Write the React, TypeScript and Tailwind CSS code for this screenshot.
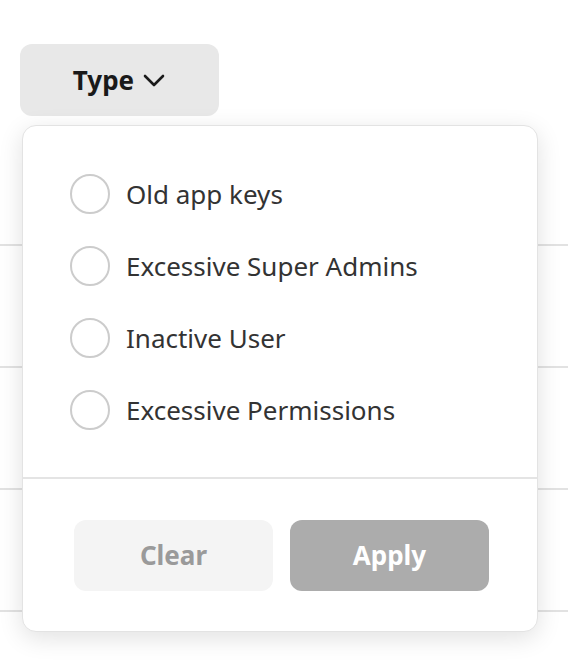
import { useState } from "react";

const options = [
  "Old app keys",
  "Excessive Super Admins",
  "Inactive User",
  "Excessive Permissions",
];

export default function App() {
  const [selected, setSelected] = useState<string | null>(null);

  return (
    <div
      className="relative h-[672px] w-[568px] overflow-hidden bg-white"
      style={{ fontFamily: '"Noto Sans", "Open Sans", sans-serif' }}
    >
      {/* table rows behind the menu */}
      <div className="h-[246px] border-b-2 border-[#e2e2e2] pl-[20px] pt-[44px]">
        <button className="flex h-[72px] w-[199px] items-center justify-center gap-[8px] rounded-[12px] bg-[#e8e8e8] text-[26px] font-bold text-[#1a1a1a]">
          Type
          <svg width="24" height="16" viewBox="0 0 24 16" fill="none">
            <polyline
              points="3,4 12,13 21,4"
              stroke="#1a1a1a"
              strokeWidth="2.6"
              strokeLinecap="round"
              strokeLinejoin="round"
            />
          </svg>
        </button>
      </div>
      <div className="h-[122px] border-b-2 border-[#e2e2e2]" />
      <div className="h-[122px] border-b-2 border-[#e2e2e2]" />
      <div className="h-[122px] border-b-2 border-[#e2e2e2]" />

      {/* dropdown */}
      <div className="absolute left-[22px] top-[125px] flex w-[516px] flex-col rounded-[14px] border border-[#e3e3e3] bg-white shadow-[0_6px_24px_rgba(0,0,0,0.12)]">
        <div className="flex flex-col pb-[31px] pl-[47px] pt-[32px]">
          {options.map((o) => (
            <label
              key={o}
              className="flex h-[72px] cursor-pointer items-center gap-[16px]"
              onClick={() => setSelected(o)}
            >
              <span className="flex h-[40px] w-[40px] items-center justify-center rounded-full border-2 border-[#cccccc]">
                {selected === o && (
                  <span className="h-[20px] w-[20px] rounded-full bg-[#333]" />
                )}
              </span>
              <span className="text-[26px] text-[#333333]">{o}</span>
            </label>
          ))}
        </div>
        <div className="h-[2px] bg-[#e4e4e4]" />
        <div className="flex gap-[17px] pb-[40px] pl-[51px] pt-[41px]">
          <button
            className="h-[71px] w-[199px] rounded-[12px] bg-[#f4f4f4] text-[26px] font-bold text-[#9a9a9a]"
            onClick={() => setSelected(null)}
          >
            Clear
          </button>
          <button className="h-[71px] w-[199px] rounded-[12px] bg-[#acacac] text-[26px] font-bold text-white">
            Apply
          </button>
        </div>
      </div>
    </div>
  );
}
